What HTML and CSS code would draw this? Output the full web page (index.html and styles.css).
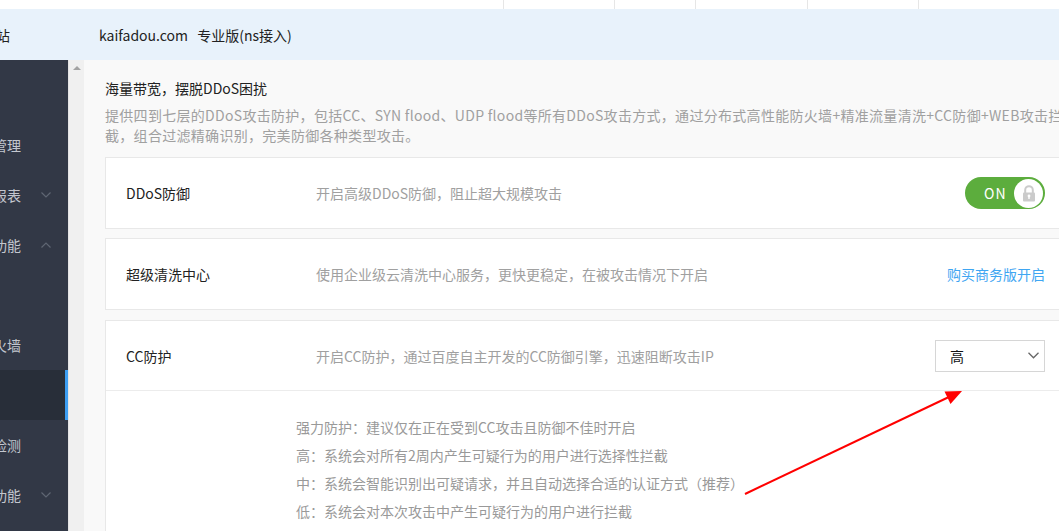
FILE: index.html
```html
<!DOCTYPE html>
<html lang="zh-CN">
<head>
  <meta charset="UTF-8">
  <meta name="viewport" content="width=device-width, initial-scale=1.0">
  <title>云加速 - DDoS防御</title>
  <link rel="stylesheet" href="styles.css">
</head>
<body>
  <div class="topbar">
    <div class="tab tab-first"></div>
    <div class="tab" style="width:111px"></div>
    <div class="tab" style="width:81px"></div>
    <div class="tab" style="width:112px"></div>
    <div class="tab" style="width:111px"></div>
    <div class="tab tab-last"></div>
  </div>

  <div class="header">
    <div class="site"><span>我的网站</span></div>
    <div class="domain">kaifadou.com <span class="plan">专业版(ns接入)</span></div>
  </div>

  <div class="layout">
    <div class="sidebar">
      <div class="nav-item"><div class="nav-text"><span>域名管理</span></div></div>
      <div class="nav-item"><div class="nav-text"><span>统计报表</span></div>
        <svg class="nav-arrow" width="10" height="6" viewBox="0 0 10 6"><polyline points="0.5,0.5 5,5 9.5,0.5"/></svg>
      </div>
      <div class="nav-item"><div class="nav-text"><span>安全功能</span></div>
        <svg class="nav-arrow" width="10" height="6" viewBox="0 0 10 6"><polyline points="0.5,5.5 5,1 9.5,5.5"/></svg>
      </div>
      <div class="nav-item nav-sub"><div class="nav-text"><span>DDoS防御</span></div></div>
      <div class="nav-item"><div class="nav-text"><span>网站防火墙</span></div></div>
      <div class="nav-item nav-sub active"><div class="nav-text"><span>CC防护</span></div></div>
      <div class="nav-item"><div class="nav-text"><span>安全检测</span></div></div>
      <div class="nav-item"><div class="nav-text"><span>高级功能</span></div>
        <svg class="nav-arrow" width="10" height="6" viewBox="0 0 10 6"><polyline points="0.5,0.5 5,5 9.5,0.5"/></svg>
      </div>
    </div>

    <div class="scrollbar">
      <div class="scroll-up"></div>
    </div>

    <div class="main">
      <div class="intro-title">海量带宽，摆脱DDoS困扰</div>
      <div class="intro-desc">提供四到七层的DDoS攻击防护，包括CC、SYN flood、UDP flood等所有DDoS攻击方式，通过分布式高性能防火墙+精准流量清洗+CC防御+WEB攻击拦<br>截，组合过滤精确识别，完美防御各种类型攻击。</div>

      <div class="card card-first">
        <div class="row">
          <div class="row-label">DDoS防御</div>
          <div class="row-desc">开启高级DDoS防御，阻止超大规模攻击</div>
          <div class="switch">
            <span class="switch-text">ON</span>
            <span class="switch-knob">
              <svg width="14" height="17" viewBox="0 0 14 17">
                <path d="M3.2 8 V5 a3.8 3.8 0 0 1 7.6 0 V8" fill="none" stroke="#cbcbcb" stroke-width="2"/>
                <rect x="1" y="7.5" width="12" height="9" rx="1" fill="#cbcbcb"/>
                <circle cx="7" cy="11" r="1.4" fill="#fff"/>
                <rect x="6.3" y="11" width="1.4" height="3" fill="#fff"/>
              </svg>
            </span>
          </div>
        </div>
      </div>

      <div class="card card-second">
        <div class="row">
          <div class="row-label">超级清洗中心</div>
          <div class="row-desc">使用企业级云清洗中心服务，更快更稳定，在被攻击情况下开启</div>
          <a class="buy-link" href="#">购买商务版开启</a>
        </div>
      </div>

      <div class="card">
        <div class="row row-border">
          <div class="row-label">CC防护</div>
          <div class="row-desc">开启CC防护，通过百度自主开发的CC防御引擎，迅速阻断攻击IP</div>
          <div class="select">
            <span>高</span>
            <svg width="11" height="7" viewBox="0 0 11 7"><polyline points="0.5,0.8 5.5,5.8 10.5,0.8" fill="none" stroke="#666" stroke-width="1.3"/></svg>
          </div>
        </div>
        <div class="levels">
          <p>强力防护：建议仅在正在受到CC攻击且防御不佳时开启</p>
          <p>高：系统会对所有2周内产生可疑行为的用户进行选择性拦截</p>
          <p>中：系统会智能识别出可疑请求，并且自动选择合适的认证方式（推荐）</p>
          <p>低：系统会对本次攻击中产生可疑行为的用户进行拦截</p>
        </div>
      </div>
    </div>
  </div>

  <svg class="annotation" width="1059" height="531" viewBox="0 0 1059 531">
    <line x1="745" y1="494" x2="951" y2="396" stroke="#f00" stroke-width="2"/>
    <polygon points="962,391 950.5,404 944.5,391.5" fill="#f00"/>
  </svg>
</body>
</html>
```

FILE: styles.css
```css
* {
  margin:0;
  padding:0;
  box-sizing:border-box;
}

html, body {
  width:1059px;
  height:531px;
  overflow:hidden;
}

body {
  position:relative;
  font-family:"Noto Sans CJK SC", "Microsoft YaHei", sans-serif;
  font-size:14px;
  color:#333;
  background:#fff;
}

/* top tabs strip */
.topbar {
  display:flex;
  height:9px;
  background:#fff;
}

.tab {
  height:100%;
  border-left:1px solid #e6e6e6;
}

.tab-first {
  width:503px;
  border-left:none;
}

.tab-last {
  flex:1;
}

/* header */
.header {
  display:flex;
  align-items:center;
  height:51px;
  background:#e8f2fb;
  color:#222;
}

.site {
  width:10px;
  overflow:hidden;
  display:flex;
  justify-content:flex-end;
  white-space:nowrap;
}

.domain {
  margin-left:89px;
  white-space:nowrap;
  font-size:14px;
}

.plan {
  margin-left:6px;
}

/* body layout */
.layout {
  display:flex;
  height:471px;
}

.sidebar {
  width:68px;
  flex-shrink:0;
  background:#323846;
  padding-top:60px;
}

.nav-item {
  display:flex;
  align-items:center;
  height:50px;
  color:#c3c7cf;
}

.nav-text {
  width:21px;
  overflow:hidden;
  display:flex;
  justify-content:flex-end;
  white-space:nowrap;
  flex-shrink:0;
}

.nav-sub .nav-text {
  width:0;
}

.nav-arrow {
  margin-left:20px;
}

.nav-arrow polyline {
  fill:none;
  stroke:#5f6673;
  stroke-width:1.2;
}

.nav-item.active {
  background:#282e39;
  border-right:3px solid #3d9ef2;
}

.scrollbar {
  width:16px;
  flex-shrink:0;
  background:#f0f0f0;
  border-left:1px solid #e4e4e4;
  padding-top:6px;
}

.scroll-up {
  width:0;
  height:0;
  margin-left:4px;
  border-left:4px solid transparent;
  border-right:4px solid transparent;
  border-bottom:4px solid #a3a3a3;
}

.main {
  flex:1;
  background:#f9f9f9;
  padding:18px 0 0 21px;
  overflow:hidden;
}

.intro-title {
  line-height:20px;
  color:#222;
  white-space:nowrap;
}

.intro-desc {
  margin-top:7px;
  font-size:14px;
  line-height:20px;
  letter-spacing:0.3px;
  color:#a0a0a0;
  white-space:nowrap;
}

/* cards */
.card {
  width:956px;
  margin-top:10px;
  background:#fff;
  border:1px solid #e8e8e8;
}

.card-first {
  margin-top:12px;
}

.card-second {
  margin-top:9px;
}

.row {
  display:flex;
  align-items:center;
  height:70px;
  padding:0 15px 0 20px;
}

.row-border {
  border-bottom:1px solid #ececec;
}

.row-label {
  width:190px;
  flex-shrink:0;
  color:#222;
}

.row-desc {
  flex:1;
  font-size:14px;
  color:#a0a0a0;
  white-space:nowrap;
}

.switch {
  display:flex;
  align-items:center;
  justify-content:space-between;
  width:80px;
  height:32px;
  border-radius:16px;
  background:#5cad3d;
  padding:0 2px 0 19px;
}

.switch-text {
  color:#fff;
  font-size:14px;
  letter-spacing:1px;
}

.switch-knob {
  display:flex;
  align-items:center;
  justify-content:center;
  width:29px;
  height:29px;
  border-radius:50%;
  background:#fff;
}

.buy-link {
  color:#3fa6f2;
  font-size:14px;
  text-decoration:none;
}

.select {
  display:flex;
  align-items:center;
  justify-content:space-between;
  width:110px;
  height:32px;
  border:1px solid #d6d6d6;
  padding:0 5px 0 14px;
  color:#111;
}

.levels {
  padding:22px 0 8px 190px;
}

.levels p {
  font-size:14px;
  line-height:28px;
  color:#999;
  white-space:nowrap;
}

.annotation {
  position:absolute;
  left:0;
  top:0;
  pointer-events:none;
}
```
